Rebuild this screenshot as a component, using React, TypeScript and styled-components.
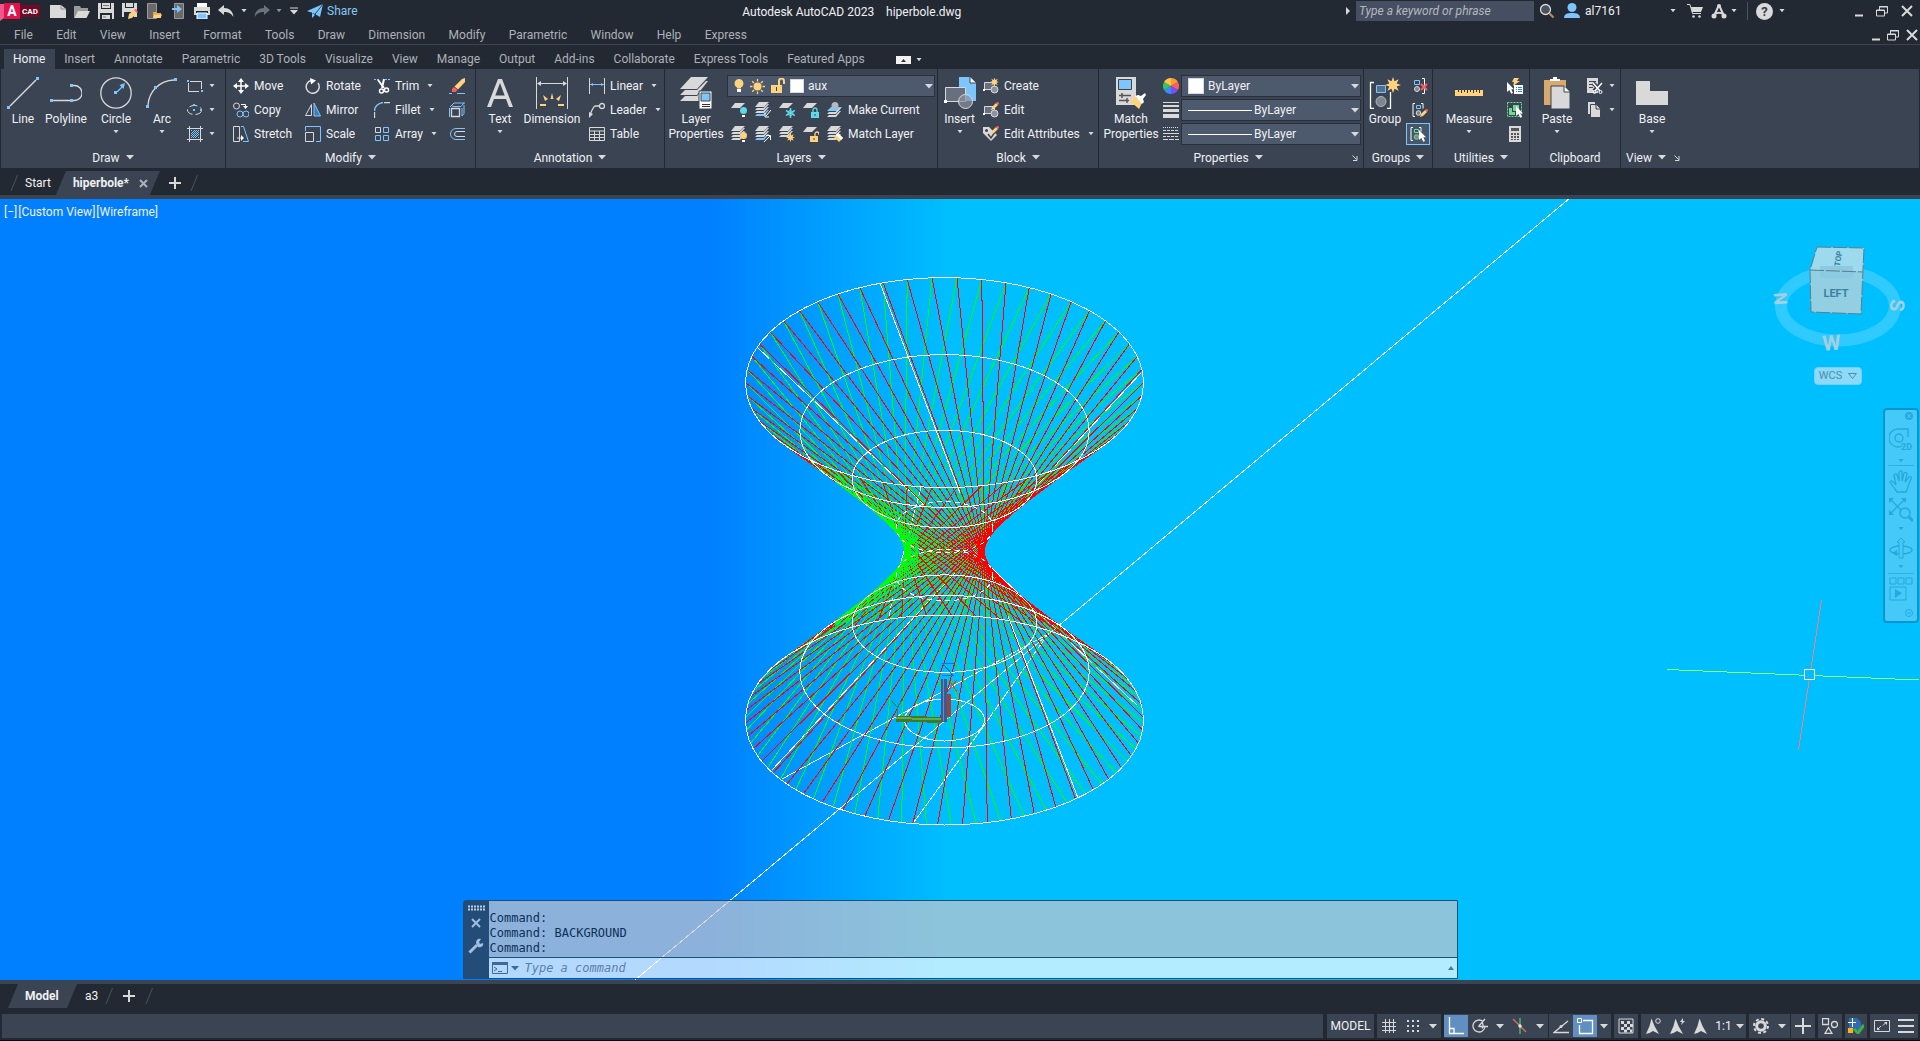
import React from "react";
import styled, { createGlobalStyle, css } from "styled-components";

const c = {
  dark: "#222933",
  panel: "#3b4453",
  field: "#4d5a6e",
  edge: "#2a303b",
  text: "#f0f1f3",
  muted: "#aeb2b8",
  g: "#d9d9d9",
  b: "#7cc5ff",
  y: "#ffd27d",
  teal: "#5fd9e6",
  green: "#6fd98f",
  red: "#ff5d5d",
};

const Global = createGlobalStyle`
  * { box-sizing: border-box; }
  html, body, #root { height: 100%; }
  body { margin: 0; background: ${c.dark}; overflow: hidden; }
  body, button, input, select {
    font-family: Roboto, "Open Sans", "Liberation Sans", sans-serif;
    font-size: 12px;
    line-height: 16px;
    color: ${c.text};
  }
  button { background: none; border: 0; padding: 0; margin: 0; cursor: default; white-space: nowrap; }
`;

/* ---------- layout ---------- */

const Page = styled.div`
  display: flex;
  flex-direction: column;
  height: 100vh;
  background: ${c.dark};
`;
const Svg = styled.svg`
  display: block;
  flex: none;
`;
const TitleBar = styled.header`
  display: flex;
  align-items: center;
  height: 22px;
`;
const Title = styled.h1`
  flex: 1;
  margin: 0;
  padding-top: 2px;
  font-size: 12px;
  font-weight: 400;
  text-align: center;
  white-space: pre;
`;
const Cluster = styled.div<{ $gap?: number; $pl?: number; $pr?: number; $ml?: string }>`
  display: flex;
  align-items: center;
  gap: ${(p) => p.$gap ?? 0}px;
  padding-left: ${(p) => p.$pl ?? 0}px;
  padding-right: ${(p) => p.$pr ?? 0}px;
  margin-left: ${(p) => p.$ml ?? "0"};
`;
const IconButton = styled.button<{ $w?: number; $h?: number }>`
  display: flex;
  flex: none;
  align-items: center;
  justify-content: center;
  width: ${(p) => (p.$w ? p.$w + "px" : "auto")};
  height: ${(p) => (p.$h ? p.$h + "px" : "auto")};
`;
const ShareLink = styled.a`
  display: flex;
  align-items: center;
  gap: 4px;
  padding-left: 7px;
  color: #86c8f5;
  text-decoration: none;
`;
const SearchBox = styled.input`
  width: 178px;
  height: 20px;
  margin-left: 6px;
  padding: 0 3px;
  border: 0;
  background: #454f61;
  font-style: italic;
  &::placeholder {
    color: #b4b8be;
  }
`;
const Account = styled.button`
  display: flex;
  align-items: center;
  gap: 5px;
  width: 112px;
  margin-left: 9px;
  & > span {
    flex: 1;
    text-align: left;
  }
`;
const Divider = styled.span`
  width: 1px;
  height: 18px;
  background: #4b5462;
`;
const MenuBar = styled.nav`
  display: flex;
  align-items: center;
  height: 23px;
  padding-left: 14px;
  padding-top: 3px;
  border-bottom: 1px solid ${c.panel};
`;
const MenuList = styled.div`
  display: flex;
  justify-content: space-between;
  width: 733px;
`;
const MenuItem = styled.button`
  color: ${c.muted};
`;
const TabBar = styled.div`
  display: flex;
  align-items: flex-end;
  height: 24px;
  padding-left: 4px;
`;
const RibbonTab = styled.button<{ $on?: boolean }>`
  height: 20px;
  padding: 0 10px 0 9px;
  color: ${c.muted};
  ${(p) =>
    p.$on &&
    css`
      background: ${c.panel};
      color: ${c.text};
    `}
`;
const MinimizeRibbon = styled.button`
  display: flex;
  align-items: center;
  gap: 5px;
  height: 18px;
  margin-left: 21px;
`;

/* ---------- ribbon ---------- */

const Ribbon = styled.main`
  display: flex;
  height: 99px;
  margin: 0 1px;
  background: ${c.panel};
`;
const PanelBox = styled.section<{ $w: number }>`
  display: flex;
  flex: none;
  flex-direction: column;
  width: ${(p) => p.$w}px;
  padding-top: 5px;
  border-right: 1px solid ${c.dark};
  &:last-child {
    border-right: 0;
  }
`;
const PanelBody = styled.div<{ $pl?: number }>`
  display: flex;
  height: 72px;
  padding-left: ${(p) => p.$pl ?? 0}px;
`;
const PanelFoot = styled.div<{ $left?: boolean }>`
  display: flex;
  height: 22px;
  align-items: center;
  padding: 1px 5px 0;
`;
const PanelName = styled.button<{ $left?: boolean }>`
  display: flex;
  flex: ${(p) => (p.$left ? "none" : 1)};
  align-items: center;
  justify-content: center;
  gap: 6px;
  margin-right: ${(p) => (p.$left ? 8 : 0)}px;
`;
const BigButton = styled.button<{ $w: number }>`
  display: flex;
  flex: none;
  flex-direction: column;
  align-items: center;
  width: ${(p) => p.$w}px;
  padding-top: 3px;
  line-height: 15px;
  & > span {
    margin-top: 3px;
    white-space: pre;
  }
  & > svg:last-child:not(:first-child) {
    margin-top: 3px;
  }
`;
const Grid = styled.div<{ $cols: string; $pl?: number }>`
  display: grid;
  grid-template-columns: ${(p) => p.$cols};
  grid-auto-rows: 24px;
  padding-left: ${(p) => p.$pl ?? 0}px;
`;
const RowButton = styled.button<{ $gap?: number }>`
  display: flex;
  align-items: center;
  gap: ${(p) => p.$gap ?? 5}px;
`;
const IconRow = styled.div`
  display: flex;
  align-items: center;
  gap: 8px;
  padding-left: 4px;
`;
const Toggle = styled.button`
  display: flex;
  align-items: center;
  justify-content: center;
  width: 24px;
  height: 22px;
  margin: 1px 0 0 -6px;
  border: 1px solid ${c.b};
  background: #46566c;
`;
const ComboBox = styled.label<{ $w: number }>`
  display: flex;
  align-items: center;
  width: ${(p) => p.$w}px;
  height: 22px;
  margin: 1px 0;
  padding: 0 1px 0 6px;
  border: 1px solid ${c.edge};
  background: ${c.field};
`;
const ComboSelect = styled.select`
  flex: 1;
  min-width: 0;
  padding: 0 0 0 4px;
  border: 0;
  appearance: none;
  background: transparent;
  outline: none;
`;
const Swatch = styled.span<{ $s: number }>`
  width: ${(p) => p.$s}px;
  height: ${(p) => p.$s}px;
  border: 1px solid #d9d9d9;
  background: #fff;
`;
const Rule = styled.span`
  width: 64px;
  height: 1px;
  margin-right: -2px;
  background: #fff;
`;

/* ---------- document tabs ---------- */

const FileTabs = styled.div`
  display: flex;
  align-items: flex-end;
  height: 31px;
  padding-left: 10px;
  border-bottom: 4px solid ${c.panel};
`;
const LayoutTabs = styled.div`
  display: flex;
  align-items: flex-start;
  height: 34px;
  padding-left: 8px;
  border-top: 4px solid ${c.panel};
`;
const PlainTab = styled.button<{ $pl: number; $pr: number }>`
  height: 24px;
  padding: 0 ${(p) => p.$pr}px 0 ${(p) => p.$pl}px;
`;
const SlantTab = styled.div<{ $w: number }>`
  display: flex;
  align-items: center;
  justify-content: space-between;
  width: ${(p) => p.$w}px;
  height: 24px;
  padding: 0 12px 0 17px;
  background: ${c.panel};
  clip-path: polygon(10px 0, 100% 0, calc(100% - 10px) 100%, 0 100%);
  & > button:first-child {
    font-weight: 700;
  }
`;

/* ---------- drawing area ---------- */

const Viewport = styled.div`
  position: relative;
  flex: 1;
  min-height: 0;
  overflow: hidden;
  background: linear-gradient(90deg, #0080ff 37%, #00bfff 49.5%);
`;
const Drawing = styled.svg`
  display: block;
  width: 100%;
  height: 100%;
`;
const ViewLabels = styled.div`
  position: absolute;
  top: 5px;
  left: 4px;
  display: flex;
  gap: 1px;
`;
const CubeArea = styled.div`
  position: absolute;
  top: 44px;
  right: 10px;
  display: flex;
  flex-direction: column;
  align-items: center;
  gap: 8px;
`;
const Wcs = styled.button`
  display: flex;
  align-items: center;
  gap: 6px;
  height: 18px;
  padding: 0 4px;
  border: 1px solid #6fd3fa;
  border-radius: 4px;
  background: #8cdaf8;
  color: #4a8eac;
  font-size: 11px;
  line-height: 14px;
`;
const NavBar = styled.div`
  position: absolute;
  top: 209px;
  right: 1px;
  display: flex;
  flex-direction: column;
  align-items: center;
  width: 36px;
  height: 215px;
  padding: 0 4px;
  border: 2px solid #0995cd;
  border-radius: 4px;
  background: #45c9f9;
`;
const NavRule = styled.span`
  width: 26px;
  height: 1px;
  background: #2cb2e2;
`;
const CommandDock = styled.div`
  position: absolute;
  right: 0;
  bottom: 1px;
  left: 0;
  display: flex;
  justify-content: center;
`;
const CommandWindow = styled.div`
  display: flex;
  width: 995px;
  height: 79px;
  border: 1px solid #1d4f78;
  border-radius: 3px 0 0 0;
`;
const CommandRail = styled.div`
  display: flex;
  flex-direction: column;
  align-items: center;
  gap: 6px;
  width: 24px;
  padding-top: 4px;
  background: rgba(50, 55, 63, 0.7);
`;
const CommandMain = styled.div`
  display: flex;
  flex: 1;
  flex-direction: column;
  border-left: 1px solid #1d4f78;
  font-family: "DejaVu Sans Mono", monospace;
`;
const History = styled.div`
  flex: 1;
  padding: 10px 2px 0 1px;
  background: rgba(200, 200, 204, 0.7);
  color: #0d2f57;
  line-height: 15px;
  white-space: pre;
`;
const Prompt = styled.div`
  display: flex;
  align-items: center;
  height: 21px;
  padding: 0 3px;
  border-top: 1px solid #1d4f78;
  background: rgba(255, 255, 255, 0.7);
`;
const PromptInput = styled.input`
  flex: 1;
  padding: 0 6px;
  border: 0;
  background: transparent;
  outline: none;
  font-family: "DejaVu Sans Mono", monospace;
  font-style: italic;
  &::placeholder {
    color: #5b7fa8;
  }
`;

/* ---------- status bar ---------- */

const StatusBar = styled.footer`
  display: flex;
  height: 24px;
  padding: 0 2px;
`;
const StatusSpace = styled.div`
  flex: 1;
  background: ${c.panel};
`;
const StatusGroup = styled.div<{ $ml?: number }>`
  display: flex;
  align-items: center;
  margin-left: ${(p) => p.$ml ?? 3}px;
  background: ${c.panel};
`;
const StatusButton = styled.button<{ $w: number; $on?: boolean }>`
  display: flex;
  align-items: center;
  justify-content: center;
  width: ${(p) => p.$w}px;
  height: 22px;
  background: ${(p) => (p.$on ? "#628fc2" : "transparent")};
`;
const BottomEdge = styled.div`
  height: 3px;
  border-bottom: 1px solid #0b0a0c;
`;

/* ---------- icon helpers ---------- */

type Kids = { children?: React.ReactNode };
const I = ({ w = 16, h = 16, children }: Kids & { w?: number; h?: number }) => (
  <Svg width={w} height={h} viewBox={`0 0 ${w} ${h}`} fill="none" aria-hidden="true">
    {children}
  </Svg>
);
const Caret = ({ big, color = c.g }: { big?: boolean; color?: string }) =>
  big ? (
    <I w={8} h={5}><path d="M0 0h8L4 4.5z" fill={color} /></I>
  ) : (
    <I w={6} h={4}><path d="M0.5 0h5L3 3.3z" fill={color} /></I>
  );
const Cursor = ({ x, y }: { x: number; y: number }) => (
  <path transform={`translate(${x} ${y})`} d="M0 0v10l2.4-2 1.8 3.8 1.8-.9L4.3 7.3H7z" fill="#fff" />
);
const Pencil = ({ x, y }: { x: number; y: number }) => (
  <g transform={`translate(${x} ${y})`}>
    <path d="M0 8l1-3 4-4 2 2-4 4z" fill={c.y} />
    <path d="M5 1l1-1h1l1 1v1L7 3z" fill={c.red} />
  </g>
);
const Star = ({ x, y, r, n = 8 }: { x: number; y: number; r: number; n?: number }) => {
  const pts = Array.from({ length: n * 2 }, (_, i) => {
    const a = (Math.PI * i) / n;
    const q = i % 2 ? r * 0.5 : r;
    return `${(x + q * Math.sin(a)).toFixed(2)},${(y - q * Math.cos(a)).toFixed(2)}`;
  });
  return <polygon points={pts.join(" ")} fill={c.y} />;
};
const Sheet = ({ y, fill = c.g, s = 1, x = 0 }: { y: number; fill?: string; s?: number; x?: number }) => (
  <path d={`M${x} ${y + 5 * s}L${x + 4 * s} ${y}H${x + 14 * s}L${x + 9 * s} ${y + 5 * s}z`} fill={fill} />
);
const SheetEdge = ({ y, fill = c.g }: { y: number; fill?: string }) => (
  <path d={`M0 ${y + 3}l2-2h6.500l4-4h1.500l-5 6z`} fill={fill} />
);
const WinMin = () => <I w={8} h={12}><path d="M0 10.500h8" stroke={c.g} strokeWidth="2" /></I>;
const WinRestore = () => (
  <I w={12} h={12}>
    <path d="M0.500 5h8v6h-8zM3.500 5V1.500h8V8H9M0 5.500h9M3 2h9" stroke={c.g} />
  </I>
);
const WinClose = () => <I w={12} h={12}><path d="M1 1l10 10M11 1L1 11" stroke={c.g} strokeWidth="2" /></I>;
const Plus = ({ s = 12 }: { s?: number }) => (
  <I w={s} h={s}><path d={`M${s / 2} 0v${s}M0 ${s / 2}h${s}`} stroke={c.g} strokeWidth="2" /></I>
);
const Slash = () => <I w={8} h={24}><path d="M1 20L7.500 4" stroke="#4b5360" /></I>;
const Launcher = () => <I w={6} h={6}><path d="M0.500 0.500l4 4M5 1v4.500H1" stroke={c.g} /></I>;

/* ---------- title bar icons ---------- */

const Logo = () => (
  <Svg width={40} height={22} viewBox="0 0 40 22" role="img" aria-label="AutoCAD">
    <path d="M0 4h4v14l-4 3z" fill="#f0588a" />
    <path d="M4 3h16v16H4z" fill="#e6114c" />
    <path d="M20 5h20v12H20z" fill="#6f0a27" />
    <text x="12" y="16" fontSize="14" fontWeight="700" fill="#fff" textAnchor="middle">A</text>
    <text x="30" y="14" fontSize="8" fontWeight="700" fill="#fff" textAnchor="middle">CAD</text>
  </Svg>
);
const quick: [string, React.ReactNode][] = [
  ["New", <I><path d="M0 2h11l5 4v9H0z" fill={c.g} /><path d="M11 2v4h5" stroke="#888" /></I>],
  ["Open", <I><path d="M0 3h6l1 2h7v3H5L1 15H0z" fill="#9a9a9a" /><path d="M4 8h12l-3.500 7H0.500z" fill={c.g} /></I>],
  ["Save", <I><path d="M0 0h16v16H0z" fill={c.g} /><path d="M3 0h10v6H3zM2 10h12v6H2z" fill={c.dark} /><path d="M4 0h8v5H4zM4 12h8v4H4z" fill={c.g} /><path d="M5 2.500h6M5 14h3" stroke="#777" /></I>],
  ["Save As", <I><path d="M0 0h15v14H0z" fill={c.g} /><path d="M3 0h9v5H3zM2 9h10v5H2z" fill={c.dark} /><path d="M4 0h7v4H4z" fill={c.g} /><path d="M6 16l1-5 5-4 3 3-5 5z" fill={c.y} /><path d="M12 7l2-1 2 3-1 1z" fill={c.red} /></I>],
  ["Open from Mobile", <I><path d="M1.500 0.500h9v15h-9z" fill="#6a6a6a" stroke="#9a9a9a" /><path d="M7 9h3l1 1h4v5H7z" fill="#e0ab5a" /><path d="M8.500 11.500H16L14.500 15H7z" fill={c.y} /></I>],
  ["Save to Mobile", <I><path d="M4.500 0.500h9v15h-9z" fill="#6a6a6a" stroke="#9a9a9a" /><path d="M2 5h5V2l5 4-5 4V7H2z" fill={c.b} /></I>],
  ["Plot", <I><path d="M3 0h10v4H3z" fill="#fff" /><path d="M0 4h16v8H0z" fill={c.g} /><path d="M2 8h12v2H2z" fill={c.dark} /><path d="M3 10h10v6H3z" fill={c.b} stroke="#fff" /></I>],
];
const Undo = ({ dim }: { dim?: boolean }) => (
  <I>
    <path
      transform={dim ? "matrix(-1 0 0 1 16 0)" : undefined}
      d="M0 7l6-5v3c5 0 9 3 9.500 9C13 10 10 9 6 9v3z"
      fill={dim ? "#6c727b" : c.g}
    />
  </I>
);

/* ---------- ribbon icons ---------- */

const LineIcon = () => <I w={32} h={32}><path d="M3 29L29 3" stroke={c.g} strokeWidth="1.500" /><path d="M0 29h3v3H0zM29 0h3v3h-3z" fill={c.b} /></I>;
const PolylineIcon = () => <I w={32} h={32}><path d="M3 23.500h17M23 8.500h1.500a7.500 7.500 0 0 1 0 15H23" stroke={c.g} strokeWidth="1.300" /><path d="M0 22h3v3H0zM20 22h3v3h-3zM20 7h3v3h-3z" fill={c.b} /></I>;
const CircleIcon = () => <I w={32} h={32}><circle cx="16" cy="16" r="15.200" stroke={c.g} strokeWidth="1.300" /><path d="M17 15l6-6" stroke={c.b} strokeWidth="1.300" /><path d="M14 14h3v3h-3zM25 6l-1.500 6-4-4z" fill={c.b} /></I>;
const ArcIcon = () => <I w={32} h={32}><path d="M2 28C3 15 13 3.500 28 3" stroke={c.g} strokeWidth="1.300" /><path d="M0 28h3v3H0zM8 9h3v3H8zM28 1h3v3h-3z" fill={c.b} /></I>;
const RectIcon = () => <I><path d="M3 3.500h11.500V11M12 13.500H1.500V5" stroke={c.g} /><path d="M0 2h2v2H0zM14 12h2v2h-2z" fill={c.b} /></I>;
const EllipseIcon = () => <I><ellipse cx="7.500" cy="8" rx="7" ry="4.500" stroke={c.g} strokeDasharray="8 3" /><path d="M6 2h2v2H6zM6 7h2v2H6zM13 7h2v2h-2z" fill={c.b} /></I>;
const HatchIcon = () => <I><path d="M2.500 0v16M13.500 0v16M0 2.500h16M0 13.500h16" stroke={c.g} /><path d="M4 8l4-4M4 12l8-8M8 12l4-4M4 5l1-1M11 12l1-1M4 10l6-6M6 12l6-6" stroke={c.b} /></I>;
const MoveIcon = () => <I><path d="M8 2v12M2 8h12" stroke="#fff" strokeWidth="1.500" /><path d="M8 0l3 4H5zM8 16l3-4H5zM0 8l4-3v6zM16 8l-4-3v6z" fill="#fff" /></I>;
const CopyIcon = () => <I><circle cx="3.500" cy="4" r="3" stroke={c.g} /><path d="M8 2.500h4.500V5" stroke="#fff" /><path d="M10 4h5l-2.500 3z" fill="#fff" /><circle cx="7" cy="12" r="3" stroke={c.b} /><circle cx="13" cy="12" r="3" stroke={c.b} /></I>;
const StretchIcon = () => <I><path d="M0.500 0.500h6v15h-6zM4 12h6" stroke={c.g} /><path d="M8 9l3 3-3 3z" fill="#fff" /><path d="M8 0.500h2.500l5 15H10" stroke={c.b} /></I>;
const RotateIcon = () => <I><path d="M13 5A6.500 6.500 0 1 1 6 2.500" stroke={c.g} strokeWidth="1.500" /><path d="M5 0l6 2.500-5 4z" fill="#fff" /></I>;
const MirrorIcon = () => <I><path d="M6.500 2.500v11h-6z" stroke={c.g} /><path d="M9 1v13h6.500z" fill="#3f7eb0" stroke={c.b} /></I>;
const ScaleIcon = () => <I><path d="M0.500 5V0.500h15v15H11" stroke={c.b} /><path d="M0.500 6.500h8v9h-8z" stroke={c.g} /></I>;
const TrimIcon = () => <I><path d="M0 1.500h6M11 1.500h5" stroke={c.b} strokeDasharray="2 1" /><path d="M4 2l6 8M10 1L8 10" stroke="#fff" strokeWidth="2" /><circle cx="7.500" cy="13" r="2" stroke="#fff" strokeWidth="1.500" /><circle cx="12.500" cy="12" r="2" stroke="#fff" strokeWidth="1.500" /></I>;
const FilletIcon = () => <I><path d="M0.500 9C0.500 4 5 1 9 0.500" stroke={c.b} strokeWidth="1.300" /><path d="M0.500 10v6M10 0.500h6" stroke={c.g} strokeWidth="1.300" /></I>;
const ArrayIcon = () => <I><path d="M1.500 1.500h5v5h-5z" stroke={c.g} /><path d="M9.500 1.500h5v5h-5zM1.500 9.500h5v5h-5zM9.500 9.500h5v5h-5z" stroke={c.b} /></I>;
const EraseIcon = () => <I><path d="M0 15.500h3M8 15.500h8" stroke={c.b} /><path d="M5.500 8.500L13 1l3-1v4l-7 7.500z" fill={c.y} /><path d="M3 11l2-2 3.500 3-2 2H3z" fill={c.red} /></I>;
const ExplodeIcon = () => <I><path d="M2.500 6.500h8v8h-8z" stroke={c.g} strokeWidth="1.300" /><path d="M1 5l4-4h11M3 4l2 .500h7L15 1M13 6v8l2-2.500V3M0.500 6v9" stroke={c.b} /></I>;
const OffsetIcon = () => <I><path d="M16 2.500H7a5.500 5.500 0 0 0 0 11h9" stroke={c.b} /><path d="M16 5.500H8a2.500 2.500 0 0 0 0 5h8" stroke={c.g} /></I>;
const TextIcon = () => <I w={32} h={32}><path d="M3 30L14 2h4l11 28h-4l-3-8H10l-3 8zM11.300 18.500h9.400L16 6z" fill={c.g} fillRule="evenodd" /></I>;
const DimensionIcon = () => <I w={34} h={32}><path d="M1.500 0v32M32.500 0v32M3 6.500h28" stroke={c.g} /><path d="M2 6.500l4-2.500v5zM32 6.500L28 4v5z" fill={c.g} /><path d="M15.500 22l1.500-6 1.500 6zM10 24l-2-6 5 4zM24 24l2-6-5 4zM5 29l0-2 6 0v2zM29 29v-2l-6 0v2z" fill={c.y} /></I>;
const LinearIcon = () => <I><path d="M0.500 0v16M15.500 0v16" stroke={c.g} /><path d="M1 6.500h14" stroke={c.b} /><path d="M1 6.500L4 5v3zM15 6.500L12 5v3z" fill={c.b} /></I>;
const LeaderIcon = () => <I><path d="M1 13C3 8 4 5 6 4h4" stroke={c.g} strokeWidth="1.300" /><circle cx="13" cy="4" r="2.500" stroke={c.g} strokeWidth="1.300" /><path d="M0 16l0-6 4 2z" fill={c.g} /></I>;
const TableIcon = () => <I><path d="M0.500 1.500h15v13h-15zM0 5h16M0 8.500h16M0 11.500h16M5.500 5v10M10.500 5v10" stroke={c.g} /></I>;
const LayerPropsIcon = () => (
  <I w={32} h={32}>
    <path d="M0 12L11 0h17L17 12zM0 18l5-5h12l9-9h2L17 18zM0 24l5-5h12l4-4v9z" fill={c.g} />
    <path d="M19 14h13v18H19z" fill="#fff" stroke={c.panel} />
    <path d="M21 16h9v8h-9z" fill={c.b} stroke="#444" />
    <path d="M22 27.500h8M22 29.500h8" stroke="#333" />
  </I>
);
const Bulb = ({ x, y, f = c.y }: { x: number; y: number; f?: string }) => (
  <g transform={`translate(${x} ${y})`}><circle cx="3.500" cy="3.500" r="3.500" fill={f} /><path d="M2 8h3v2H2z" fill="#fff" /></g>
);
const Padlock = ({ x, y, f, open }: { x: number; y: number; f: string; open?: boolean }) => (
  <g transform={`translate(${x} ${y})`}><path d="M0 4h8v6H0z" fill={f} /><path d={open ? "M5 4V2a2 2 0 0 1 4 0v1" : "M2 4V2a2 2 0 0 1 4 0v2"} stroke={f} strokeWidth="1.300" /><path d="M3.500 6h1v2h-1z" fill={c.panel} /></g>
);
const layerRow1: [string, React.ReactNode][] = [
  ["Off", <I><Sheet y={1} /><Bulb x={9} y={5} f={c.teal} /></I>],
  ["Isolate", <I><Sheet y={0} /><SheetEdge y={5} /><SheetEdge y={8} /><SheetEdge y={11} fill={c.b} /><path d="M16 8l-5 6M10 11v4h4" stroke="#fff" /></I>],
  ["Freeze", <I><Sheet y={1} /><path d="M11.500 6v10M7 8.500l9 5M7 13.500l9-5" stroke={c.teal} strokeWidth="1.500" /><circle cx="11.500" cy="11" r="2.500" stroke={c.teal} /></I>],
  ["Lock", <I><Sheet y={1} /><Padlock x={8} y={6} f={c.teal} /></I>],
];
const layerRow2: [string, React.ReactNode][] = [
  ["Turn All Layers On", <I><Sheet y={0} /><SheetEdge y={5} /><SheetEdge y={8} /><SheetEdge y={11} /><Bulb x={9} y={6} /></I>],
  ["Unisolate", <I><Sheet y={0} /><SheetEdge y={5} /><SheetEdge y={8} /><SheetEdge y={11} fill={c.b} /><path d="M9 16l6-6M11 9.500h4.500V14" stroke="#fff" /></I>],
  ["Thaw All Layers", <I><Sheet y={0} /><SheetEdge y={5} /><SheetEdge y={8} /><Star x={11.500} y={11.500} r={4.500} /></I>],
  ["Unlock", <I><Sheet y={1} /><Padlock x={7} y={6} f={c.y} open /></I>],
];
const MakeCurrentIcon = () => <I><circle cx="8" cy="3.500" r="3.500" fill="#b8b8b8" /><path d="M0 9l4-4h2l2 2 3-2h4l-4 4z" fill={c.b} /><SheetEdge y={9} /><SheetEdge y={12} /></I>;
const MatchLayerIcon = () => <I><Sheet y={0} /><SheetEdge y={5} /><SheetEdge y={8} /><SheetEdge y={11} /><path d="M7 11l4-4 5 5-4 4z" fill={c.y} /><path d="M9 9l2-2 5 5-2 2z" fill="#fff" /></I>;
const SunIcon = () => <I w={15} h={15}><circle cx="7.500" cy="7.500" r="4" fill={c.y} /><path d="M7.500 0v2.500M7.500 12.500V15M0 7.500h2.500M12.500 7.500H15M2.200 2.200l1.800 1.800M11 11l1.800 1.800M2.200 12.800L4 11M11 4l1.800-1.800" stroke={c.y} strokeWidth="1.300" /></I>;
const InsertIcon = () => (
  <I w={32} h={32}>
    <path d="M15 0h11l6 6v18H15z" fill={c.b} /><path d="M26 0v6h6" fill="#fff" stroke={c.panel} />
    <path d="M1.500 10.500h20v14h-20z" fill="#67707f" stroke={c.g} /><circle cx="21.500" cy="24.500" r="7" fill="#8b93a0" fillOpacity=".7" stroke={c.g} /><path d="M0 23h3v3H0z" fill="#fff" />
  </I>
);
const BlockBase = () => <><path d="M1.500 4.500h10v7h-10z" fill="#67707f" stroke={c.g} /><circle cx="11.500" cy="11.500" r="3.500" fill="#8b93a0" stroke={c.g} /><path d="M0 11h2v2H0z" fill="#fff" /></>;
const CreateIcon = () => <I><BlockBase /><Star x={11.500} y={4} r={4.500} /></I>;
const EditIcon = () => <I><BlockBase /><Pencil x={8} y={0} /></I>;
const AttribIcon = () => <I><path d="M0 1h6l8 8-6 6-8-8z" fill={c.g} /><circle cx="3.500" cy="4.500" r="1.500" fill={c.panel} /><path d="M5 8l3 4 4-6" stroke="#444" strokeWidth="1.500" /><Pencil x={8} y={0} /></I>;
const MatchPropsIcon = () => (
  <I w={32} h={32}>
    <path d="M1 0h20v28H1z" fill={c.g} /><path d="M3.500 2.500h13v10h-13z" fill={c.b} stroke="#444" />
    <path d="M4 18.500h12M4 23.500h10M7 16v5M12 21v5" stroke="#555" strokeWidth="1.500" />
    <path d="M15 24l5-5 7 7-3 6z" fill={c.y} /><path d="M20 19l3-1 3 1 4-3 1 2-3 4 1 3-2 2z" fill="#fff" />
  </I>
);
const wheelColors = ["#ff9a3c", "#ff5c5c", "#7a4dff", "#3a8bff", "#35c46a", "#ffc83c"];
const WheelIcon = () => (
  <I>
    {wheelColors.map((f, i) => {
      const p = (k: number) => `${(8 + 8 * Math.sin((k * Math.PI) / 3)).toFixed(2)} ${(8 - 8 * Math.cos((k * Math.PI) / 3)).toFixed(2)}`;
      return <path key={f} d={`M8 8L${p(i)}A8 8 0 0 1 ${p(i + 1)}z`} fill={f} />;
    })}
  </I>
);
const WeightIcon = () => <I><path d="M0 0.500h16" stroke={c.g} /><path d="M0 4h16" stroke={c.g} strokeWidth="2" /><path d="M0 8.500h16" stroke={c.g} strokeWidth="3" /><path d="M0 14h16" stroke={c.g} strokeWidth="4" /></I>;
const TypeIcon = () => <I><path d="M0 1.500h16" stroke={c.g} strokeDasharray="1 1" /><path d="M0 4.500h16M0 10.500h16" stroke={c.g} strokeDasharray="3 1" /><path d="M0 7.500h16" stroke={c.g} /><path d="M0 13.500h16" stroke={c.g} strokeDasharray="5 1" /></I>;
const GroupIcon = () => <I w={32} h={32}><path d="M5 5.500H1.500v26H5M18 31.500h3.500V15" stroke="#fff" strokeWidth="1.300" /><path d="M7.500 8.500h9v7h-9z" fill="#56708a" stroke={c.b} /><circle cx="12" cy="24.500" r="5" fill="#7e8692" stroke="#b5b9bf" /><Star x={24} y={8} r={8} n={8} /></I>;
const GroupBase = ({ col = c.b }: { col?: string }) => <><path d="M3 1.500H1v13h2" stroke="#fff" /><path d="M4.500 3.500h4v3h-4z" stroke={col} /><circle cx="6.500" cy="11" r="2.300" fill="#7e8692" stroke={col === c.b ? c.g : col} /></>;
const UngroupIcon = () => <I><path d="M10 0.500h2.500v15H10" stroke="#fff" /><path d="M2.500 2.500h5v4h-5z" stroke={c.b} /><circle cx="5" cy="11" r="2.500" fill="#7e8692" stroke={c.g} /><path d="M9 6l6 6M15 6l-6 6" stroke={c.red} strokeWidth="2" /></I>;
const GroupEditIcon = () => <I><GroupBase /><path d="M9 1.500h2v5" stroke="#fff" /><Pencil x={8} y={7} /></I>;
const GroupSelIcon = () => <I><GroupBase col={c.green} /><path d="M9 1.500h2v4" stroke="#fff" /><Cursor x={9} y={4} /></I>;
const MeasureIcon = () => <I w={32} h={32}><path d="M2 13h28v6H2z" fill={c.y} /><path d="M5.500 13v2M8.500 13v3M11.500 13v2M14.500 13v3M17.500 13v2M20.500 13v3M23.500 13v2M26.500 13v3" stroke="#333" /></I>;
const QuickSelectIcon = () => <I><path d="M7 0l5 0-2 3h3L6 8l1-4H5z" fill={c.y} /><Cursor x={0} y={4} /><path d="M7 7h9v9H7z" fill="#fff" /><path d="M9 9.500h1M11 9.500h4M9 11.500h1M11 11.500h4M9 13.500h1M11 13.500h4" stroke="#2f7fd0" /></I>;
const SelectAllIcon = () => <I><path d="M0.500 0.500h14v14h-14z" stroke={c.green} strokeDasharray="2 1" /><path d="M2 6h3v4h3v3H2zM6 3h6v6H6z" fill={c.green} /><Cursor x={9} y={4} /></I>;
const CalculatorIcon = () => <I><path d="M2 0h12v16H2z" fill={c.g} /><path d="M4 2h8v3H4zM4 7h2v2H4zM7 7h2v2H7zM10 7h2v2h-2zM4 10h2v2H4zM7 10h2v2H7zM10 10h2v2h-2zM4 13h2v1H4zM7 13h2v1H7zM10 13h2v1h-2z" fill="#555" /></I>;
const PasteIcon = () => <I w={32} h={32}><path d="M3 3h22v25H3z" fill="#d9a86c" /><path d="M9 4V2h3V0h4v2h3v2z" fill="#fff" /><path d="M10 9h13l6 6v17H10z" fill={c.g} stroke={c.panel} /><path d="M23 9v6h6" fill="#fff" stroke={c.panel} /></I>;
const CutIcon = () => <I><path d="M0 0h11v15H0z" fill={c.g} /><path d="M2 3.500h7M2 6.500h6M2 9.500h4" stroke="#444" /><path d="M6 5l8 8M15 5l-8 8" stroke={c.panel} strokeWidth="4" /><path d="M6 5l7 8M15 5l-7 8" stroke="#fff" strokeWidth="1.500" /><circle cx="7.500" cy="14" r="1.500" stroke="#fff" /><circle cx="13.500" cy="14" r="1.500" stroke="#fff" /></I>;
const CopyClipIcon = () => <I><path d="M1 0h7v12H1z" fill={c.g} /><path d="M3.500 2.500h6l4 4v9h-10z" fill={c.g} stroke={c.panel} /><path d="M9 2v5h5" stroke={c.panel} /></I>;
const BaseIcon = () => <I w={32} h={32}><path d="M0 4h14v10h18v14H0z" fill={c.g} /></I>;

/* ---------- ribbon pieces ---------- */

const Big = ({ icon, label, w, caret }: { icon: React.ReactNode; label: string; w: number; caret?: boolean }) => (
  <BigButton $w={w}>
    {icon}
    <span>{label}</span>
    {caret && <Caret />}
  </BigButton>
);
const Row = ({ icon, label, caret }: { icon: React.ReactNode; label?: string; caret?: boolean }) => (
  <RowButton $gap={label ? 5 : 6}>
    {icon}
    {label && <span>{label}</span>}
    {caret && <Cluster $pl={label ? 3 : 0}><Caret /></Cluster>}
  </RowButton>
);
const Panel = ({ name, w, pl, caret = true, launch, left, children }: Kids & { name: string; w: number; pl?: number; caret?: boolean; launch?: boolean; left?: boolean }) => (
  <PanelBox $w={w}>
    <PanelBody $pl={pl}>{children}</PanelBody>
    <PanelFoot>
      <PanelName $left={left}>
        {name}
        {caret && <Caret big />}
      </PanelName>
      {launch && <IconButton aria-label={name + " settings"}><Launcher /></IconButton>}
    </PanelFoot>
  </PanelBox>
);
const Combo = ({ w, label, value, children }: Kids & { w: number; label: string; value: string }) => (
  <ComboBox $w={w}>
    {children}
    <ComboSelect aria-label={label} defaultValue={value}>
      <option>{value}</option>
    </ComboSelect>
    <Caret big />
  </ComboBox>
);

const RibbonPanels = () => (
  <Ribbon>
    <Panel name="Draw" w={225} pl={2}>
      <Big w={40} icon={<LineIcon />} label="Line" />
      <Big w={46} icon={<PolylineIcon />} label="Polyline" />
      <Big w={54} icon={<CircleIcon />} label="Circle" caret />
      <Big w={38} icon={<ArcIcon />} label="Arc" caret />
      <Grid $cols="32px" $pl={6}>
        <Row icon={<RectIcon />} caret />
        <Row icon={<EllipseIcon />} caret />
        <Row icon={<HatchIcon />} caret />
      </Grid>
    </Panel>
    <Panel name="Modify" w={250} pl={7}>
      <Grid $cols="72px 69px 75px 16px">
        <Row icon={<MoveIcon />} label="Move" />
        <Row icon={<RotateIcon />} label="Rotate" />
        <Row icon={<TrimIcon />} label="Trim" caret />
        <Row icon={<EraseIcon />} />
        <Row icon={<CopyIcon />} label="Copy" />
        <Row icon={<MirrorIcon />} label="Mirror" />
        <Row icon={<FilletIcon />} label="Fillet" caret />
        <Row icon={<ExplodeIcon />} />
        <Row icon={<StretchIcon />} label="Stretch" />
        <Row icon={<ScaleIcon />} label="Scale" />
        <Row icon={<ArrayIcon />} label="Array" caret />
        <Row icon={<OffsetIcon />} />
      </Grid>
    </Panel>
    <Panel name="Annotation" w={189} pl={1}>
      <Big w={46} icon={<TextIcon />} label="Text" caret />
      <Big w={58} icon={<DimensionIcon />} label="Dimension" />
      <Grid $cols="80px" $pl={8}>
        <Row icon={<LinearIcon />} label="Linear" caret />
        <Row icon={<LeaderIcon />} label="Leader" caret />
        <Row icon={<TableIcon />} label="Table" />
      </Grid>
    </Panel>
    <Panel name="Layers" w={273}>
      <Big w={62} icon={<LayerPropsIcon />} label={"Layer\nProperties"} />
      <Grid $cols="208px">
        <Combo w={208} label="Layer" value="aux">
          <Cluster $gap={5}>
            <I w={11} h={16}><path d="M5 1a4.500 4.500 0 0 1 2 8.500v1H3v-1A4.500 4.500 0 0 1 5 1z" fill={c.y} /><path d="M3 11h4v3H3z" fill="#fff" /></I>
            <SunIcon />
            <I w={15} h={16}><path d="M1 7h11v8H1z" fill={c.y} /><path d="M9 7V3a2.500 2.500 0 0 1 5 0v3" stroke={c.y} strokeWidth="2" /><path d="M6 9h1v4H6z" fill="#444" /></I>
            <Swatch $s={14} />
          </Cluster>
        </Combo>
        <IconRow>
          {layerRow1.map(([n, ic]) => <IconButton key={n} aria-label={n}>{ic}</IconButton>)}
          <Row icon={<MakeCurrentIcon />} label="Make Current" />
        </IconRow>
        <IconRow>
          {layerRow2.map(([n, ic]) => <IconButton key={n} aria-label={n}>{ic}</IconButton>)}
          <Row icon={<MatchLayerIcon />} label="Match Layer" />
        </IconRow>
      </Grid>
    </Panel>
    <Panel name="Block" w={161}>
      <Big w={43} icon={<InsertIcon />} label="Insert" caret />
      <Grid $cols="114px" $pl={2}>
        <Row icon={<CreateIcon />} label="Create" />
        <Row icon={<EditIcon />} label="Edit" />
        <Row icon={<AttribIcon />} label="Edit Attributes" caret />
      </Grid>
    </Panel>
    <Panel name="Properties" w={265} launch>
      <Big w={64} icon={<MatchPropsIcon />} label={"Match\nProperties"} />
      <Grid $cols="18px 180px">
        <IconButton aria-label="Object color" $w={16}><WheelIcon /></IconButton>
        <Combo w={180} label="Object color" value="ByLayer"><Swatch $s={16} /></Combo>
        <IconButton aria-label="Lineweight" $w={16}><WeightIcon /></IconButton>
        <Combo w={180} label="Lineweight" value="ByLayer"><Rule /></Combo>
        <IconButton aria-label="Linetype" $w={16}><TypeIcon /></IconButton>
        <Combo w={180} label="Linetype" value="ByLayer"><Rule /></Combo>
      </Grid>
    </Panel>
    <Panel name="Groups" w={69}>
      <Big w={42} icon={<GroupIcon />} label="Group" />
      <Grid $cols="18px" $pl={6}>
        <Row icon={<UngroupIcon />} />
        <Row icon={<GroupEditIcon />} />
        <Toggle aria-label="Group selection on" aria-pressed="true"><GroupSelIcon /></Toggle>
      </Grid>
    </Panel>
    <Panel name="Utilities" w={97} pl={8}>
      <Big w={56} icon={<MeasureIcon />} label="Measure" caret />
      <Grid $cols="16px" $pl={10}>
        <Row icon={<QuickSelectIcon />} />
        <Row icon={<SelectAllIcon />} />
        <Row icon={<CalculatorIcon />} />
      </Grid>
    </Panel>
    <Panel name="Clipboard" w={91} pl={3} caret={false}>
      <Big w={48} icon={<PasteIcon />} label="Paste" caret />
      <Grid $cols="32px" $pl={6}>
        <Row icon={<CutIcon />} caret />
        <Row icon={<CopyClipIcon />} caret />
      </Grid>
    </Panel>
    <Panel name="View" w={60} pl={7} launch left>
      <Big w={48} icon={<BaseIcon />} label="Base" caret />
    </Panel>
  </Ribbon>
);

/* ---------- drawing ---------- */

const CX = 944.5;
const CY = 551.3;
const RX = 199;
const RATIO = 105 / 199;
const HALF = 168.7;
const COUNT = 50;
const TWIST = 156.8;
const rad = (d: number) => (d * Math.PI) / 180;

const rulings = (sign: number) => {
  let d = "";
  for (let k = 0; k < COUNT; k++) {
    const top = 3.6 + (360 / COUNT) * k;
    const low = top + sign * TWIST;
    const at = (a: number, cy: number) =>
      `${(CX + RX * Math.sin(rad(a))).toFixed(1)} ${(cy - RX * RATIO * Math.cos(rad(a))).toFixed(1)}`;
    d += `M${at(top, CY - HALF)}L${at(low, CY + HALF)}`;
  }
  return d;
};
const rings: [number, number][] = (
  [
    [168.7, 199],
    [120.3, 144.7],
    [72.3, 92.3],
    [24, 48.5],
  ] as [number, number][]
).flatMap(([z, r]) => [[CY - z, r], [CY + z, r]] as [number, number][]);

const Model = () => (
  <Drawing viewBox="0 199 1920 781" preserveAspectRatio="xMidYMid slice" fill="none" shapeRendering="crispEdges" role="img" aria-label="Hyperboloid wireframe">
    <clipPath id="leftWaist">
      <polygon points="835,470 895,505 918,530 918,575 885,600 835,630" />
    </clipPath>
    <path d="M1570 198L635 980M757 347L1142 710M1141 373L772 770M782 779L1048 634L983 727L914 822M921 487L910 530L895 583L889 618" stroke="#fff" />
    <path d={rulings(-1)} stroke="#00ff00" />
    <path d={rulings(1)} stroke="#ff0000" />
    <path d={rulings(-1)} stroke="#00ff00" clipPath="url(#leftWaist)" />
    <g stroke="#fff">
      {rings.map(([y, r]) => (
        <ellipse key={y} cx={CX} cy={y} rx={r} ry={r * RATIO} strokeDasharray={r < 50 ? "5 4" : undefined} />
      ))}
      <ellipse cx={CX} cy={720} rx={40} ry={21} />
      <path d="M880 283L960 493M1008 616L1078 798" />
    </g>
    <path d="M896 718.500L942 720" stroke="#3f7a2c" strokeWidth="6" />
    <path d="M896 718L942 719.500" stroke="#5fae45" strokeWidth="2" />
    <path d="M949 694v23" stroke="#9b4438" strokeWidth="4" />
    <path d="M944 679v43" stroke="#3c5a94" strokeWidth="6" />
    <path d="M943 679v42" stroke="#6c8bc4" />
    <path d="M942 663.500h12M942 675.500h12M943 664l10 11" stroke="#0a6cff" />
    <path d="M948 691l9-11M949 680l8 12" stroke="#e0402c" />
    <path d="M891 700l6 7v9M897 707l6-7" stroke="#1d9a4a" />
    <path d="M1667 669.500L1919 680" stroke="#8cff5a" />
    <path d="M1821.500 600L1798.500 750" stroke="#f08080" />
    <path d="M1804.500 669.500h10v10h-10z" stroke="#fff" fill="#00bfff" />
  </Drawing>
);

const ViewCube = () => (
  <Svg width={144} height={116} viewBox="1766 243 144 116" fill="none" role="img" aria-label="View cube">
    <ellipse cx="1838" cy="306" rx="57" ry="34.500" stroke="#2fcaff" strokeWidth="12" />
    <path d="M1817 247l47 1-1 24-53-2z" fill="#9ddaee" />
    <path d="M1810 270l53 2-2 42-50-2z" fill="#93cfe2" />
    <path d="M1820 266h33v12h-33z" fill="#8cc9e2" />
    <path d="M1817 247l47 1-3 66-50-2-1-42 7-23M1810 270l53 2" stroke="#5b7f8a" strokeDasharray="14 2" />
    <g fontWeight="700" textAnchor="middle">
      <text x="1836" y="297" fontSize="11" fill="#3a819f">LEFT</text>
      <text transform="translate(1841 259) rotate(-80)" fontSize="8" fill="#3a819f">TOP</text>
      <g fill="#a6cfdd">
        <text transform="translate(1774 299) rotate(86)" fontSize="18">N</text>
        <text transform="translate(1890 305) rotate(94)" fontSize="20">S</text>
        <text transform="translate(1832 350) rotate(-4)" fontSize="21">W</text>
      </g>
    </g>
  </Svg>
);

const navInk = "#25a9dc";
const NavigationBar = () => (
  <NavBar>
    <Cluster $ml="auto">
      <IconButton aria-label="Close navigation bar" $h={12}><I w={8} h={8}><circle cx="4" cy="4" r="4" fill={navInk} /><path d="M2 2l4 4M6 2L2 6" stroke="#45c9f9" /></I></IconButton>
    </Cluster>
    <IconButton aria-label="2D wheel" $h={34}>
      <I w={24} h={24}><path d="M19 10V2h-9a9 9 0 1 0 3 17" stroke={navInk} strokeWidth="1.300" /><circle cx="10" cy="11" r="4" stroke={navInk} strokeWidth="1.300" /><text x="12" y="23" fontSize="9" fontWeight="700" fill={navInk}>2D</text></I>
    </IconButton>
    <IconButton aria-label="Wheel options" $h={9}><Caret color={navInk} /></IconButton>
    <NavRule />
    <IconButton aria-label="Pan" $h={32}>
      <I w={24} h={24}><path d="M8 22C5 18 3 15 1 12c1-2 3-1 6 3L5 5c1-2 3-1 3 0l2 6V2c1-2 3-1 3 0v9l2-8c1-1 3-1 3 1l-2 8 4-5c1-1 3 0 2 2-2 4-3 9-5 13z" stroke={navInk} strokeWidth="1.300" /></I>
    </IconButton>
    <IconButton aria-label="Zoom extents" $h={25}>
      <I w={24} h={24}><path d="M2 2l13 13M15 2L2 15" stroke={navInk} strokeWidth="1.300" /><path d="M0 0h5L0 5zM17 0h-5l5 5zM0 17v-5l5 5z" fill={navInk} /><circle cx="16" cy="15" r="5" fill="#45c9f9" stroke={navInk} strokeWidth="1.500" /><path d="M20 19l4 4" stroke={navInk} strokeWidth="3" /></I>
    </IconButton>
    <IconButton aria-label="Zoom options" $h={12}><Caret color={navInk} /></IconButton>
    <IconButton aria-label="Orbit" $h={26}>
      <I w={24} h={22}><ellipse cx="12" cy="13" rx="11" ry="4" stroke={navInk} strokeWidth="1.300" /><path d="M10 21V5H8l4-4 4 4h-2v16z" stroke={navInk} fill="#45c9f9" /><path d="M3 16l5-3v6z" fill={navInk} /></I>
    </IconButton>
    <IconButton aria-label="Orbit options" $h={12}><Caret color={navInk} /></IconButton>
    <NavRule />
    <IconButton aria-label="ShowMotion" $h={32}>
      <I w={24} h={24}><path d="M1 1h6v6H1zM9 1h6v6H9zM17 1h6v6h-6zM1 10h16v13H1z" stroke={navInk} /><path d="M6 12l7 4-7 5z" fill={navInk} /></I>
    </IconButton>
    <Cluster $ml="auto">
      <IconButton aria-label="Customize navigation bar" $h={16}><I w={8} h={8}><circle cx="4" cy="4" r="3.500" stroke={navInk} /><path d="M2 4h4" stroke={navInk} /></I></IconButton>
    </Cluster>
  </NavBar>
);

const CommandLine = () => (
  <CommandDock>
    <CommandWindow>
      <CommandRail>
        <I w={18} h={6}><path d="M1 1.500h17M1 4.500h17" stroke="#b9cfe6" strokeWidth="2" strokeDasharray="2 1" /></I>
        <IconButton aria-label="Close" $h={12}><I w={10} h={10}><path d="M1 1l8 8M9 1L1 9" stroke="#9dbfe2" strokeWidth="2" /></I></IconButton>
        <IconButton aria-label="Customize" $h={22}><I><path d="M1.500 14.500L9 7" stroke="#9dbfe2" strokeWidth="3" /><path d="M8 5c0-3 2-5 5-4l-2 3 1 2 3-1c1 3-2 5-5 4z" fill="#9dbfe2" /></I></IconButton>
      </CommandRail>
      <CommandMain>
        <History>{"Command:\nCommand: BACKGROUND\nCommand:"}</History>
        <Prompt>
          <IconButton aria-label="Recent commands">
            <I w={16} h={12}><path d="M0.500 0.500h15v11h-15z" stroke="#40689a" /><path d="M0 0h16v3H0z" fill="#40689a" /><path d="M2 5l3 2-3 2M6 9.500h4" stroke="#40689a" /></I>
            <Cluster $pl={3}><Caret big color="#40689a" /></Cluster>
          </IconButton>
          <PromptInput aria-label="Command" placeholder="Type a command" />
          <IconButton aria-label="Expand history"><I w={6} h={4}><path d="M0 4h6L3 0z" fill="#3f7d96" /></I></IconButton>
        </Prompt>
      </CommandMain>
    </CommandWindow>
  </CommandDock>
);

/* ---------- status icons ---------- */

const Person = ({ extra }: { extra?: React.ReactNode }) => (
  <I><path d="M6.500 0.500L9.500 8l4.500 8-6-3-3.500 2-3.500 1L4.500 8z" fill={c.g} />{extra}</I>
);
const Status = () => (
  <StatusBar>
    <StatusSpace />
    <StatusGroup $ml={4}><StatusButton $w={47}>MODEL</StatusButton></StatusGroup>
    <StatusGroup>
      <StatusButton $w={24} aria-label="Grid"><I w={14} h={14}><path d="M3.500 0v14M7.500 0v14M11.500 0v14M0 3.500h14M0 7.500h14M0 11.500h14" stroke={c.g} /></I></StatusButton>
      <StatusButton $w={24} aria-label="Snap"><I w={14} h={14}><path d="M1 2h12M1 7h12M1 12h12" stroke={c.g} strokeWidth="2" strokeDasharray="2 3" /></I></StatusButton>
      <StatusButton $w={16} aria-label="Snap options"><Caret big /></StatusButton>
    </StatusGroup>
    <StatusGroup>
      <StatusButton $w={24} $on aria-label="Ortho"><I w={18} h={18}><path d="M2.500 0v16.500H17M2 11.500h5v5" stroke="#fff" strokeWidth="1.300" /></I></StatusButton>
      <StatusButton $w={24} aria-label="Polar tracking"><I><path d="M11 3.500a6 6 0 1 0 2 5M6.500 8.500H16M6.500 8.500L13 1M10 4.500a5 5 0 0 1 0 6" stroke={c.g} strokeWidth="1.300" /></I></StatusButton>
      <StatusButton $w={16} aria-label="Polar options"><Caret big /></StatusButton>
      <StatusButton $w={24} aria-label="Isometric drafting"><I><path d="M1 1l13 13" stroke="#e06c6c" strokeWidth="1.300" /><path d="M8 0v16" stroke="#4fc07a" strokeWidth="1.300" /><path d="M7 7h2v2H7z" stroke="#fff" /></I></StatusButton>
      <StatusButton $w={16} aria-label="Isometric options"><Caret big /></StatusButton>
    </StatusGroup>
    <StatusGroup $ml={1}>
      <StatusButton $w={24} aria-label="Object snap tracking"><I><path d="M15 3L1 14.500h15" stroke={c.g} strokeWidth="1.300" /><circle cx="8" cy="8.500" r="1.500" fill={c.g} /></I></StatusButton>
      <StatusButton $w={24} $on aria-label="Object snap"><I w={18} h={18}><path d="M7 3.500h9.500v13h-13V8" stroke="#fff" strokeWidth="1.300" /><path d="M1.500 1.500h4v4h-4z" stroke="#fff" /></I></StatusButton>
      <StatusButton $w={14} aria-label="Object snap options"><Caret big /></StatusButton>
    </StatusGroup>
    <StatusGroup>
      <StatusButton $w={24} aria-label="Transparency"><I><path d="M1 1h14v14H1z" stroke={c.g} /><path d="M3 4.500h10M3 10.500h10" stroke={c.g} strokeWidth="3" strokeDasharray="3 3" /><path d="M6 7.500h10M6 13h8" stroke={c.g} strokeWidth="3" strokeDasharray="3 3" /></I></StatusButton>
    </StatusGroup>
    <StatusGroup>
      <StatusButton $w={24} aria-label="Annotation visibility"><Person extra={<circle cx="13" cy="3" r="2.300" stroke={c.g} />} /></StatusButton>
      <StatusButton $w={24} aria-label="Annotation autoscale"><Person extra={<path d="M14 0l-3 4h2l-1 3 4-4h-2z" fill={c.g} />} /></StatusButton>
      <StatusButton $w={24} aria-label="Annotation"><Person /></StatusButton>
      <StatusButton $w={33} aria-label="Annotation scale">1:1<Cluster $pl={4}><Caret big /></Cluster></StatusButton>
    </StatusGroup>
    <StatusGroup>
      <StatusButton $w={24} aria-label="Workspace"><I><circle cx="8" cy="8" r="4.300" stroke={c.g} strokeWidth="3" /><circle cx="8" cy="8" r="7" stroke={c.g} strokeWidth="2" strokeDasharray="3 2.500" /></I></StatusButton>
      <StatusButton $w={17} aria-label="Workspace options"><Caret big /></StatusButton>
    </StatusGroup>
    <StatusGroup $ml={1}><StatusButton $w={24} aria-label="Annotation monitor"><Plus s={16} /></StatusButton></StatusGroup>
    <StatusGroup><StatusButton $w={24} aria-label="Isolate objects"><I><path d="M0.500 0.500h6v6h-6zM6.500 9.500L10 15.500H3z" stroke={c.g} strokeWidth="1.300" /><circle cx="12.500" cy="6.500" r="3" stroke={c.g} strokeWidth="1.300" /></I></StatusButton></StatusGroup>
    <StatusGroup><StatusButton $w={22} aria-label="Graphics performance"><I><path d="M1 0h8l4 4v8H1z" fill="#2d6db5" /><path d="M0 4.500h8M4.500 0v9" stroke="#fff" /><path d="M0 10h5v5H0z" fill="#ffb020" /><path d="M6 11l4 4 6-8" stroke="#3fae49" strokeWidth="3" /></I></StatusButton></StatusGroup>
    <StatusGroup>
      <StatusButton $w={24} aria-label="Clean screen"><I><path d="M0.500 2.500h15v11h-15z" stroke={c.g} /><path d="M4 11l3-3M9 7.500l3-3" stroke={c.g} /><path d="M3 9v3h3zM13 7V4h-3z" fill={c.g} /></I></StatusButton>
      <StatusButton $w={24} aria-label="Customization"><I><path d="M0 2h16M0 8h16M0 14h16" stroke={c.g} strokeWidth="2" /></I></StatusButton>
    </StatusGroup>
  </StatusBar>
);

const menus = ["File", "Edit", "View", "Insert", "Format", "Tools", "Draw", "Dimension", "Modify", "Parametric", "Window", "Help", "Express"];
const tabs = ["Home", "Insert", "Annotate", "Parametric", "3D Tools", "Visualize", "View", "Manage", "Output", "Add-ins", "Collaborate", "Express Tools", "Featured Apps"];

export default function App() {
  return (
    <Page>
      <Global />
      <TitleBar>
        <Logo />
        <Cluster $gap={8} $pl={10}>
          {quick.map(([n, ic]) => <IconButton key={n} aria-label={n}>{ic}</IconButton>)}
          <IconButton aria-label="Undo"><Undo /></IconButton>
        </Cluster>
        <IconButton aria-label="Undo list" $w={20}><Caret /></IconButton>
        <IconButton aria-label="Redo"><Undo dim /></IconButton>
        <IconButton aria-label="Redo list" $w={18}><Caret color="#8c9199" /></IconButton>
        <IconButton aria-label="Customize" $w={12}><I w={8} h={8}><path d="M0 1h8" stroke={c.g} strokeWidth="1" /><path d="M0 3h8L4 7.500z" fill={c.g} /></I></IconButton>
        <ShareLink href="#share">
          <I><path d="M0 8L16 1 13 14 8 11z" fill={c.b} /><path d="M4 9l1 6 3-3M5 15L16 1" stroke={c.dark} strokeWidth=".8" /><path d="M5 10v5l3-3z" fill={c.b} /></I>
          Share
        </ShareLink>
        <Title>{"Autodesk AutoCAD 2023    hiperbole.dwg"}</Title>
        <Cluster>
          <IconButton aria-label="Expand search"><I w={4} h={8}><path d="M0 0v8l4-4z" fill={c.g} /></I></IconButton>
          <SearchBox aria-label="Search" placeholder="Type a keyword or phrase" />
          <Cluster $pl={5}>
            <IconButton aria-label="Search help"><I><circle cx="6.500" cy="6.500" r="5" fill="#4a525e" stroke={c.g} strokeWidth="1.300" /><path d="M10.500 10.500l4 4" stroke="#c08f5a" strokeWidth="2" /></I></IconButton>
          </Cluster>
          <Account>
            <I><circle cx="8" cy="4.500" r="4.500" fill={c.b} /><path d="M0 15c0-4 3-5 8-5s8 1 8 5z" fill={c.b} /></I>
            <span>al7161</span>
            <Caret />
          </Account>
          <Cluster $pl={11} $gap={8}>
            <IconButton aria-label="App store"><I><path d="M0 1.500h3l2.500 9H14" stroke={c.g} /><path d="M4 4h12l-2 5H5z" fill={c.g} /><circle cx="6.500" cy="13.500" r="1.300" fill={c.g} /><circle cx="12.500" cy="13.500" r="1.300" fill={c.g} /></I></IconButton>
            <IconButton aria-label="Autodesk app"><I><path d="M8 2L3 13M8 2l5 11M4 11c3-2 5-2 8 0" stroke={c.g} strokeWidth="2" /><circle cx="8" cy="3" r="2" fill={c.g} /><circle cx="3" cy="13" r="2.500" fill={c.g} /><circle cx="13" cy="13" r="2.500" fill={c.g} /></I></IconButton>
          </Cluster>
          <IconButton aria-label="App options" $w={14}><Caret /></IconButton>
          <Cluster $pl={6}><Divider /></Cluster>
          <Cluster $pl={8}>
            <IconButton aria-label="Help"><Svg width={17} height={17} viewBox="0 0 17 17"><circle cx="8.500" cy="8.500" r="8.500" fill={c.g} /><text x="8.500" y="13" fontSize="13" fontWeight="700" textAnchor="middle" fill="#333b47">?</text></Svg></IconButton>
          </Cluster>
          <IconButton aria-label="Help options" $w={18}><Caret /></IconButton>
          <Cluster $pl={64} $gap={13} $pr={7}>
            <IconButton aria-label="Minimize"><WinMin /></IconButton>
            <IconButton aria-label="Restore"><WinRestore /></IconButton>
            <IconButton aria-label="Close"><WinClose /></IconButton>
          </Cluster>
        </Cluster>
      </TitleBar>
      <MenuBar>
        <MenuList>{menus.map((m) => <MenuItem key={m}>{m}</MenuItem>)}</MenuList>
        <Cluster $ml="auto" $gap={7} $pr={2}>
          <IconButton aria-label="Minimize drawing"><WinMin /></IconButton>
          <IconButton aria-label="Restore drawing"><WinRestore /></IconButton>
          <IconButton aria-label="Close drawing"><WinClose /></IconButton>
        </Cluster>
      </MenuBar>
      <TabBar>
        {tabs.map((t, i) => <RibbonTab key={t} $on={i === 0}>{t}</RibbonTab>)}
        <MinimizeRibbon aria-label="Minimize ribbon">
          <I w={15} h={8}><path d="M0 0h15v8H0z" fill="#f2f2f2" /><path d="M5 6h5L7.500 3z" fill="#333" /></I>
          <Caret />
        </MinimizeRibbon>
      </TabBar>
      <RibbonPanels />
      <FileTabs>
        <Slash />
        <PlainTab $pl={7} $pr={5}>Start</PlainTab>
        <SlantTab $w={104}>
          <button>hiperbole*</button>
          <IconButton aria-label="Close tab"><I w={9} h={9}><path d="M1 1l7 7M8 1L1 8" stroke="#aeb2b8" strokeWidth="2" /></I></IconButton>
        </SlantTab>
        <IconButton aria-label="New drawing" $w={30} $h={24}><Plus /></IconButton>
        <Slash />
      </FileTabs>
      <Viewport>
        <Model />
        <ViewLabels><button>[−]</button><button>[Custom View]</button><button>[Wireframe]</button></ViewLabels>
        <CubeArea>
          <ViewCube />
          <Wcs>WCS<I w={9} h={7}><path d="M0.500 0.500h8l-4 5z" stroke="#4a8eac" /></I></Wcs>
        </CubeArea>
        <NavigationBar />
        <CommandLine />
      </Viewport>
      <LayoutTabs>
        <SlantTab $w={69}><button>Model</button></SlantTab>
        <PlainTab $pl={8} $pr={7}>a3</PlainTab>
        <Slash />
        <IconButton aria-label="New layout" $w={32} $h={24}><Plus /></IconButton>
        <Slash />
      </LayoutTabs>
      <Status />
      <BottomEdge />
    </Page>
  );
}
